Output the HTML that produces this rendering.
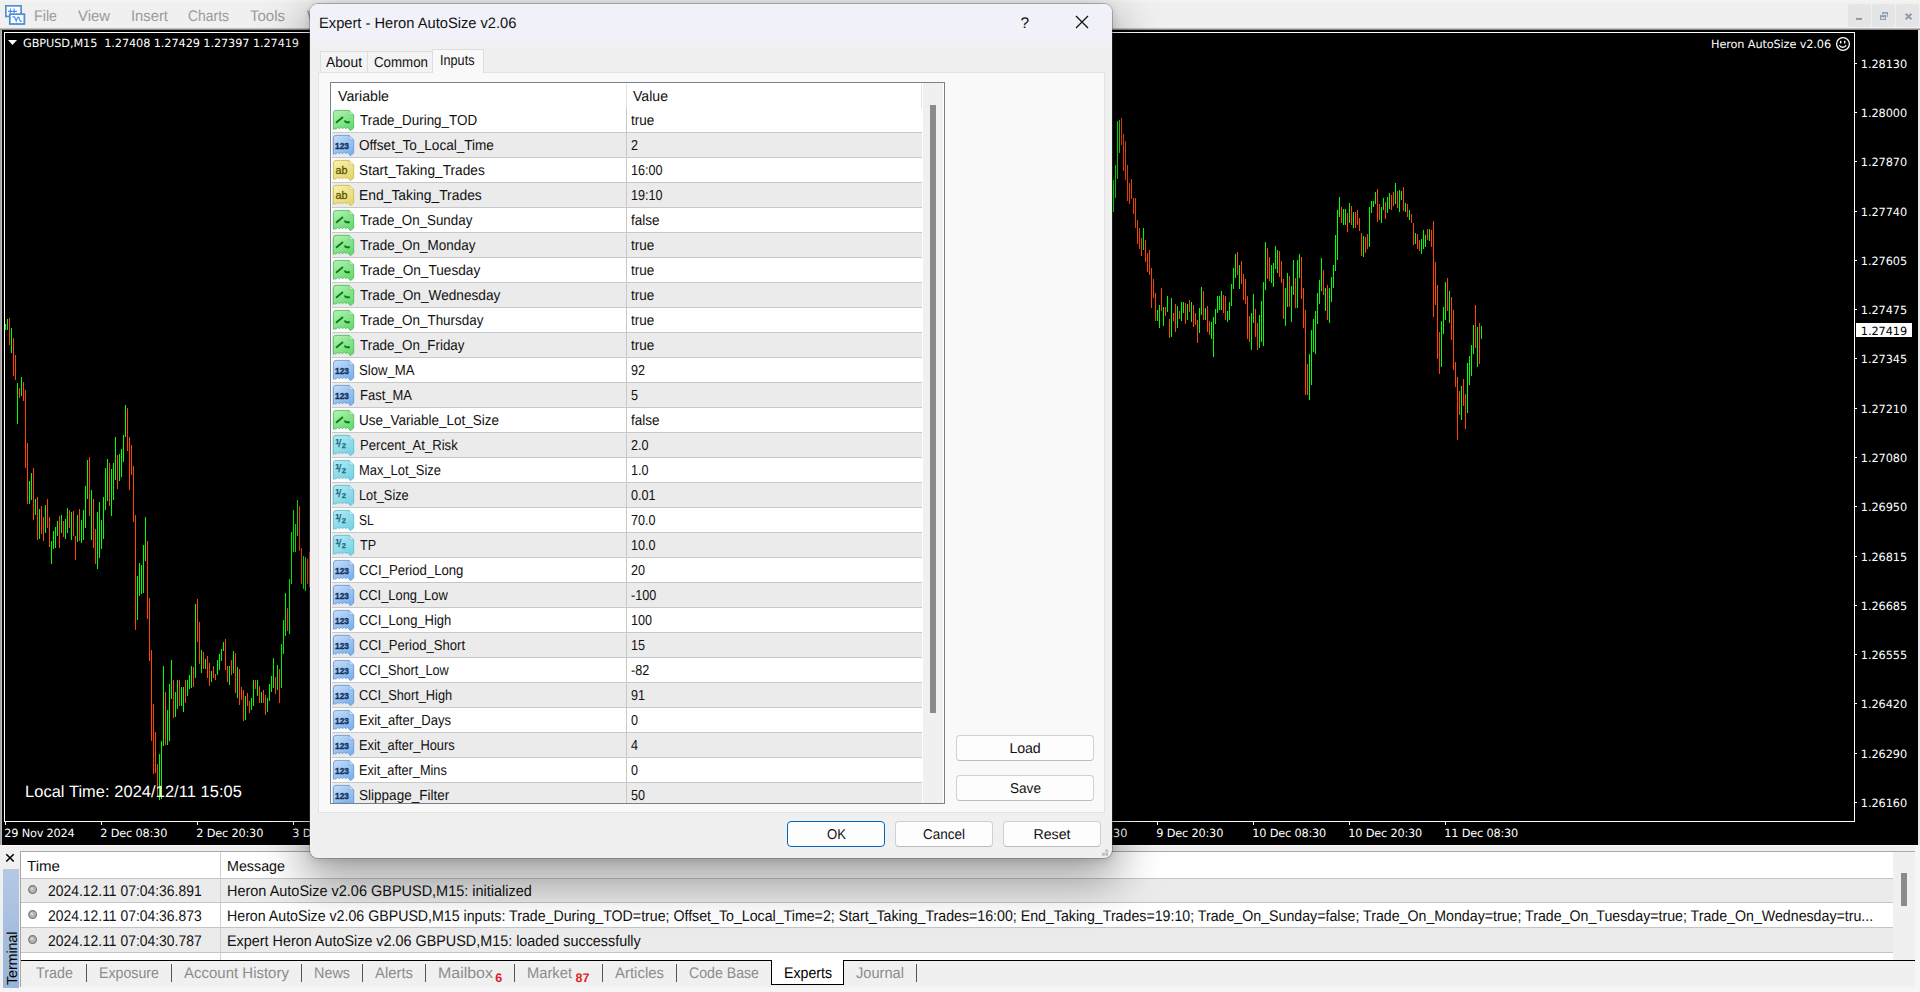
<!DOCTYPE html>
<html><head><meta charset="utf-8"><title>Expert - Heron AutoSize v2.06</title>
<style>
html,body{margin:0;padding:0;}
body{width:1920px;height:992px;overflow:hidden;background:#f0f0f0;position:relative;font-family:"Liberation Sans",sans-serif;}
.t{position:absolute;white-space:pre;text-rendering:geometricPrecision;}
.r{position:absolute;}
svg{position:absolute;overflow:visible;}
</style></head><body>
<div class="r" style="left:0px;top:0px;width:1920px;height:29px;background:linear-gradient(#f4f4f4,#f0f0f0 3px);"></div>
<svg style="left:5px;top:4px" width="22" height="22" viewBox="0 0 22 22">
<rect x="0.8" y="1.8" width="15.4" height="10.6" fill="#fdfdff" stroke="#4a8cf5" stroke-width="1.6"/>
<path d="M0.8 1.8h15.4M0.8 12.4h15.4M0.8 1.8v10.6M16.2 1.8v10.6" stroke="#5a9a7a" stroke-width="1.6" stroke-dasharray="1 2.2" fill="none"/>
<path d="M3 7.4h9M5.4 4.6v4.4M9.2 4.6v4.4" stroke="#4a8cf5" stroke-width="1.1" fill="none"/>
<rect x="4.8" y="10.2" width="14.6" height="9.8" fill="#ffffff" stroke="#4a8cf5" stroke-width="1.7"/>
<path d="M4.8 10.2h14.6M4.8 20h14.6M4.8 10.2v9.8M19.4 10.2v9.8" stroke="#5a9a7a" stroke-width="1.7" stroke-dasharray="1 2.2" fill="none"/>
<path d="M7.4 12.8h2.2l1.6 4.2 1.4-3.6 1.2 0 1.4 3.8 1.6 0" stroke="#4a8cf5" fill="none" stroke-width="1.2"/>
</svg>
<span class="t" style="left:34.00px;top:7.16px;font-size:15.4px;line-height:20px;color:#9b9b9b;transform-origin:0 50%;transform:scale(0.9269,1);">File</span>
<span class="t" style="left:78.00px;top:7.16px;font-size:15.4px;line-height:20px;color:#9b9b9b;transform-origin:0 50%;transform:scale(0.9668,1);">View</span>
<span class="t" style="left:131.00px;top:7.16px;font-size:15.4px;line-height:20px;color:#9b9b9b;transform-origin:0 50%;transform:scale(0.9607,1);">Insert</span>
<span class="t" style="left:188.00px;top:7.16px;font-size:15.4px;line-height:20px;color:#9b9b9b;transform-origin:0 50%;transform:scale(0.9040,1);">Charts</span>
<span class="t" style="left:250.00px;top:7.16px;font-size:15.4px;line-height:20px;color:#9b9b9b;transform-origin:0 50%;transform:scale(0.9736,1);">Tools</span>
<span class="t" style="left:307.00px;top:7.16px;font-size:15.4px;line-height:20px;color:#9b9b9b;transform-origin:0 50%;transform:scale(0.9494,1);">Window</span>
<div class="r" style="left:1848.3px;top:4.2px;width:22.3px;height:22.5px;background:#e5e5e5;border-radius:2.5px;"></div>
<div class="r" style="left:1872.3px;top:4.2px;width:22.3px;height:22.5px;background:#e5e5e5;border-radius:2.5px;"></div>
<div class="r" style="left:1896.3px;top:4.2px;width:22.3px;height:22.5px;background:#e5e5e5;border-radius:2.5px;"></div>
<svg style="left:1848px;top:4px" width="72" height="23" viewBox="0 0 72 23">
<g fill="#8a9bb0">
<rect x="8" y="13.9" width="6" height="2"/>
<rect x="34.3" y="8.1" width="5.6" height="1.5"/><rect x="38.9" y="8.1" width="1" height="4.8"/><rect x="34.3" y="8.1" width="1" height="2.6"/>
<rect x="32" y="11.2" width="6" height="2.1"/><rect x="32" y="11.2" width="1" height="4.7"/><rect x="37" y="11.2" width="1" height="4.7"/><rect x="32" y="14.9" width="6" height="1"/>
</g>
<path d="M57.6 9.8l5.9 5.5M63.5 9.8l-5.9 5.5" stroke="#8a9bb0" stroke-width="1.9" fill="none"/>
</svg>
<div class="r" style="left:0px;top:28px;width:1920px;height:2px;background:linear-gradient(#d8d8d8,#707070);"></div>
<div class="r" style="left:0px;top:30px;width:1920px;height:815px;background:#000;"></div>
<div class="r" style="left:0px;top:30px;width:2px;height:815px;background:linear-gradient(90deg,#9a9a9a,#c4c4c4);"></div>
<div class="r" style="left:1918px;top:30px;width:2px;height:815px;background:#e8e8e8;"></div>
<div class="r" style="left:4px;top:32px;width:1851px;height:1px;background:#fff;"></div>
<div class="r" style="left:4px;top:32px;width:1px;height:790px;background:#fff;"></div>
<div class="r" style="left:4px;top:821px;width:1851px;height:1px;background:#fff;"></div>
<div class="r" style="left:1854px;top:32px;width:1px;height:790px;background:#fff;"></div>
<svg style="left:8px;top:40px" width="10" height="6"><path d="M0 0h9l-4.5 5z" fill="#fff"/></svg>
<span class="t" style="left:23.00px;top:33.59px;font-size:11.3px;line-height:20px;color:#fff;font-family:'DejaVu Sans',sans-serif;letter-spacing:-0.094px;">GBPUSD,M15  1.27408 1.27429 1.27397 1.27419</span>
<span class="t" style="left:1711.00px;top:34.69px;font-size:11.3px;line-height:20px;color:#fff;font-family:'DejaVu Sans',sans-serif;letter-spacing:-0.119px;">Heron AutoSize v2.06</span>
<svg style="left:1835px;top:36px" width="16" height="16" viewBox="0 0 16 16"><g stroke="#fff" fill="none" stroke-width="1.3">
<circle cx="8" cy="8" r="6.4"/><path d="M4.3 9.3c1.2 2.6 5.6 2.6 6.8 0"/></g>
<rect x="5" y="4.8" width="1.4" height="2.6" fill="#fff"/><rect x="9" y="4.8" width="1.4" height="2.6" fill="#fff"/></svg>
<div class="r" style="left:1855px;top:63px;width:2px;height:1px;background:#fff;"></div>
<span class="t" style="left:1860.80px;top:54.69px;font-size:11.3px;line-height:20px;color:#fff;font-family:'DejaVu Sans',sans-serif;letter-spacing:-0.061px;">1.28130</span>
<div class="r" style="left:1855px;top:112px;width:2px;height:1px;background:#fff;"></div>
<span class="t" style="left:1860.80px;top:103.69px;font-size:11.3px;line-height:20px;color:#fff;font-family:'DejaVu Sans',sans-serif;letter-spacing:-0.061px;">1.28000</span>
<div class="r" style="left:1855px;top:161px;width:2px;height:1px;background:#fff;"></div>
<span class="t" style="left:1860.80px;top:152.69px;font-size:11.3px;line-height:20px;color:#fff;font-family:'DejaVu Sans',sans-serif;letter-spacing:-0.061px;">1.27870</span>
<div class="r" style="left:1855px;top:211px;width:2px;height:1px;background:#fff;"></div>
<span class="t" style="left:1860.80px;top:202.69px;font-size:11.3px;line-height:20px;color:#fff;font-family:'DejaVu Sans',sans-serif;letter-spacing:-0.061px;">1.27740</span>
<div class="r" style="left:1855px;top:260px;width:2px;height:1px;background:#fff;"></div>
<span class="t" style="left:1860.80px;top:251.69px;font-size:11.3px;line-height:20px;color:#fff;font-family:'DejaVu Sans',sans-serif;letter-spacing:-0.061px;">1.27605</span>
<div class="r" style="left:1855px;top:309px;width:2px;height:1px;background:#fff;"></div>
<span class="t" style="left:1860.80px;top:300.69px;font-size:11.3px;line-height:20px;color:#fff;font-family:'DejaVu Sans',sans-serif;letter-spacing:-0.061px;">1.27475</span>
<div class="r" style="left:1855px;top:358px;width:2px;height:1px;background:#fff;"></div>
<span class="t" style="left:1860.80px;top:349.69px;font-size:11.3px;line-height:20px;color:#fff;font-family:'DejaVu Sans',sans-serif;letter-spacing:-0.061px;">1.27345</span>
<div class="r" style="left:1855px;top:408px;width:2px;height:1px;background:#fff;"></div>
<span class="t" style="left:1860.80px;top:399.69px;font-size:11.3px;line-height:20px;color:#fff;font-family:'DejaVu Sans',sans-serif;letter-spacing:-0.061px;">1.27210</span>
<div class="r" style="left:1855px;top:457px;width:2px;height:1px;background:#fff;"></div>
<span class="t" style="left:1860.80px;top:448.69px;font-size:11.3px;line-height:20px;color:#fff;font-family:'DejaVu Sans',sans-serif;letter-spacing:-0.061px;">1.27080</span>
<div class="r" style="left:1855px;top:506px;width:2px;height:1px;background:#fff;"></div>
<span class="t" style="left:1860.80px;top:497.69px;font-size:11.3px;line-height:20px;color:#fff;font-family:'DejaVu Sans',sans-serif;letter-spacing:-0.061px;">1.26950</span>
<div class="r" style="left:1855px;top:556px;width:2px;height:1px;background:#fff;"></div>
<span class="t" style="left:1860.80px;top:547.69px;font-size:11.3px;line-height:20px;color:#fff;font-family:'DejaVu Sans',sans-serif;letter-spacing:-0.061px;">1.26815</span>
<div class="r" style="left:1855px;top:605px;width:2px;height:1px;background:#fff;"></div>
<span class="t" style="left:1860.80px;top:596.69px;font-size:11.3px;line-height:20px;color:#fff;font-family:'DejaVu Sans',sans-serif;letter-spacing:-0.061px;">1.26685</span>
<div class="r" style="left:1855px;top:654px;width:2px;height:1px;background:#fff;"></div>
<span class="t" style="left:1860.80px;top:645.69px;font-size:11.3px;line-height:20px;color:#fff;font-family:'DejaVu Sans',sans-serif;letter-spacing:-0.061px;">1.26555</span>
<div class="r" style="left:1855px;top:703px;width:2px;height:1px;background:#fff;"></div>
<span class="t" style="left:1860.80px;top:694.69px;font-size:11.3px;line-height:20px;color:#fff;font-family:'DejaVu Sans',sans-serif;letter-spacing:-0.061px;">1.26420</span>
<div class="r" style="left:1855px;top:753px;width:2px;height:1px;background:#fff;"></div>
<span class="t" style="left:1860.80px;top:744.69px;font-size:11.3px;line-height:20px;color:#fff;font-family:'DejaVu Sans',sans-serif;letter-spacing:-0.061px;">1.26290</span>
<div class="r" style="left:1855px;top:802px;width:2px;height:1px;background:#fff;"></div>
<span class="t" style="left:1860.80px;top:793.69px;font-size:11.3px;line-height:20px;color:#fff;font-family:'DejaVu Sans',sans-serif;letter-spacing:-0.061px;">1.26160</span>
<div class="r" style="left:1856px;top:323px;width:56px;height:14px;background:#fff;"></div>
<span class="t" style="left:1860.80px;top:321.79px;font-size:11.3px;line-height:20px;color:#000;font-family:'DejaVu Sans',sans-serif;letter-spacing:-0.061px;">1.27419</span>
<div class="r" style="left:5px;top:822px;width:1px;height:3px;background:#fff;"></div>
<span class="t" style="left:4.20px;top:823.79px;font-size:11.3px;line-height:20px;color:#fff;font-family:'DejaVu Sans',sans-serif;letter-spacing:-0.175px;">29 Nov 2024</span>
<div class="r" style="left:101px;top:822px;width:1px;height:3px;background:#fff;"></div>
<span class="t" style="left:100.20px;top:823.79px;font-size:11.3px;line-height:20px;color:#fff;font-family:'DejaVu Sans',sans-serif;letter-spacing:-0.166px;">2 Dec 08:30</span>
<div class="r" style="left:197px;top:822px;width:1px;height:3px;background:#fff;"></div>
<span class="t" style="left:196.20px;top:823.79px;font-size:11.3px;line-height:20px;color:#fff;font-family:'DejaVu Sans',sans-serif;letter-spacing:-0.166px;">2 Dec 20:30</span>
<div class="r" style="left:293px;top:822px;width:1px;height:3px;background:#fff;"></div>
<span class="t" style="left:292.20px;top:823.79px;font-size:11.3px;line-height:20px;color:#fff;font-family:'DejaVu Sans',sans-serif;letter-spacing:-0.166px;">3 Dec 08:30</span>
<div class="r" style="left:389px;top:822px;width:1px;height:3px;background:#fff;"></div>
<span class="t" style="left:388.20px;top:823.79px;font-size:11.3px;line-height:20px;color:#fff;font-family:'DejaVu Sans',sans-serif;letter-spacing:-0.166px;">3 Dec 20:30</span>
<div class="r" style="left:485px;top:822px;width:1px;height:3px;background:#fff;"></div>
<span class="t" style="left:484.20px;top:823.79px;font-size:11.3px;line-height:20px;color:#fff;font-family:'DejaVu Sans',sans-serif;letter-spacing:-0.166px;">4 Dec 08:30</span>
<div class="r" style="left:581px;top:822px;width:1px;height:3px;background:#fff;"></div>
<span class="t" style="left:580.20px;top:823.79px;font-size:11.3px;line-height:20px;color:#fff;font-family:'DejaVu Sans',sans-serif;letter-spacing:-0.166px;">4 Dec 20:30</span>
<div class="r" style="left:677px;top:822px;width:1px;height:3px;background:#fff;"></div>
<span class="t" style="left:676.20px;top:823.79px;font-size:11.3px;line-height:20px;color:#fff;font-family:'DejaVu Sans',sans-serif;letter-spacing:-0.166px;">5 Dec 08:30</span>
<div class="r" style="left:773px;top:822px;width:1px;height:3px;background:#fff;"></div>
<span class="t" style="left:772.20px;top:823.79px;font-size:11.3px;line-height:20px;color:#fff;font-family:'DejaVu Sans',sans-serif;letter-spacing:-0.166px;">5 Dec 20:30</span>
<div class="r" style="left:869px;top:822px;width:1px;height:3px;background:#fff;"></div>
<span class="t" style="left:868.20px;top:823.79px;font-size:11.3px;line-height:20px;color:#fff;font-family:'DejaVu Sans',sans-serif;letter-spacing:-0.166px;">6 Dec 08:30</span>
<div class="r" style="left:965px;top:822px;width:1px;height:3px;background:#fff;"></div>
<span class="t" style="left:964.20px;top:823.79px;font-size:11.3px;line-height:20px;color:#fff;font-family:'DejaVu Sans',sans-serif;letter-spacing:-0.166px;">6 Dec 20:30</span>
<div class="r" style="left:1061px;top:822px;width:1px;height:3px;background:#fff;"></div>
<span class="t" style="left:1060.20px;top:823.79px;font-size:11.3px;line-height:20px;color:#fff;font-family:'DejaVu Sans',sans-serif;letter-spacing:-0.166px;">9 Dec 08:30</span>
<div class="r" style="left:1157px;top:822px;width:1px;height:3px;background:#fff;"></div>
<span class="t" style="left:1156.20px;top:823.79px;font-size:11.3px;line-height:20px;color:#fff;font-family:'DejaVu Sans',sans-serif;letter-spacing:-0.166px;">9 Dec 20:30</span>
<div class="r" style="left:1253px;top:822px;width:1px;height:3px;background:#fff;"></div>
<span class="t" style="left:1252.20px;top:823.79px;font-size:11.3px;line-height:20px;color:#fff;font-family:'DejaVu Sans',sans-serif;letter-spacing:-0.168px;">10 Dec 08:30</span>
<div class="r" style="left:1349px;top:822px;width:1px;height:3px;background:#fff;"></div>
<span class="t" style="left:1348.20px;top:823.79px;font-size:11.3px;line-height:20px;color:#fff;font-family:'DejaVu Sans',sans-serif;letter-spacing:-0.168px;">10 Dec 20:30</span>
<div class="r" style="left:1445px;top:822px;width:1px;height:3px;background:#fff;"></div>
<span class="t" style="left:1444.20px;top:823.79px;font-size:11.3px;line-height:20px;color:#fff;font-family:'DejaVu Sans',sans-serif;letter-spacing:-0.168px;">11 Dec 08:30</span>
<svg style="left:0;top:0" width="1920" height="845" shape-rendering="crispEdges"><path fill="#00ff00" d="M5 324v6h1v-6zM7 319v11h1v-11zM11 328v25h1v-25zM17 383v41h1v-41zM21 377v19h1v-19zM29 481v23h1v-23zM31 473v27h1v-27zM35 499v16h1v-16zM39 509v30h1v-30zM45 505v28h1v-28zM51 541v23h1v-23zM53 531v18h1v-18zM55 527v21h1v-21zM57 521v15h1v-15zM61 515v18h1v-18zM65 519v20h1v-20zM67 508v25h1v-25zM71 512v28h1v-28zM77 515v27h1v-27zM81 520v23h1v-23zM83 510v30h1v-30zM85 486v42h1v-42zM87 460v39h1v-39zM91 490v50h1v-50zM97 512v57h1v-57zM99 502v56h1v-56zM101 520v29h1v-29zM103 497v42h1v-42zM105 468v42h1v-42zM107 459v42h1v-42zM111 469v47h1v-47zM113 463v37h1v-37zM115 437v43h1v-43zM119 454v27h1v-27zM121 449v28h1v-28zM123 435v27h1v-27zM125 405v32h1v-32zM137 576v44h1v-44zM139 563v33h1v-33zM141 565v29h1v-29zM143 545v48h1v-48zM145 517v44h1v-44zM159 754v46h1v-46zM161 741v58h1v-58zM163 666v80h1v-80zM167 710v35h1v-35zM169 684v57h1v-57zM171 660v39h1v-39zM175 692v25h1v-25zM177 680v29h1v-29zM181 687v19h1v-19zM183 687v25h1v-25zM187 680v16h1v-16zM189 675v14h1v-14zM191 666v22h1v-22zM195 604v74h1v-74zM201 650v23h1v-23zM205 659v10h1v-10zM211 671v11h1v-11zM217 660v15h1v-15zM219 654v16h1v-16zM221 649v12h1v-12zM223 642v9h1v-9zM229 666v19h1v-19zM233 651v22h1v-22zM237 667v31h1v-31zM245 696v24h1v-24zM251 698v12h1v-12zM253 680v26h1v-26zM257 680v16h1v-16zM261 692v11h1v-11zM267 698v14h1v-14zM269 684v17h1v-17zM271 676v16h1v-16zM273 658v30h1v-30zM277 665v25h1v-25zM281 644v44h1v-44zM283 620v34h1v-34zM285 593v43h1v-43zM289 579v55h1v-55zM291 532v52h1v-52zM293 510v42h1v-42zM295 524v28h1v-28zM297 500v36h1v-36zM303 556v33h1v-33zM305 557v34h1v-34zM1113 180v32h1v-32zM1115 165v33h1v-33zM1117 121v58h1v-58zM1119 120v33h1v-33zM1143 228v22h1v-22zM1157 310v11h1v-11zM1159 305v23h1v-23zM1163 307v19h1v-19zM1167 296v16h1v-16zM1171 298v39h1v-39zM1177 306v22h1v-22zM1181 302v19h1v-19zM1183 302v11h1v-11zM1187 304v16h1v-16zM1191 302v20h1v-20zM1199 308v25h1v-25zM1201 287v28h1v-28zM1205 308v12h1v-12zM1211 322v17h1v-17zM1213 317v40h1v-40zM1215 309v15h1v-15zM1217 296v17h1v-17zM1219 296v14h1v-14zM1221 291v19h1v-19zM1227 311v11h1v-11zM1229 302v18h1v-18zM1231 284v22h1v-22zM1233 268v21h1v-21zM1235 254v24h1v-24zM1239 265v24h1v-24zM1251 313v37h1v-37zM1253 294v29h1v-29zM1259 315v33h1v-33zM1261 301v41h1v-41zM1263 282v64h1v-64zM1265 242v48h1v-48zM1271 265v18h1v-18zM1273 263v24h1v-24zM1275 246v23h1v-23zM1277 250v23h1v-23zM1285 288v38h1v-38zM1287 273v34h1v-34zM1291 286v36h1v-36zM1293 260v35h1v-35zM1297 260v48h1v-48zM1299 254v24h1v-24zM1309 354v46h1v-46zM1311 330v55h1v-55zM1313 319v33h1v-33zM1315 311v43h1v-43zM1317 293v31h1v-31zM1319 280v24h1v-24zM1321 258v33h1v-33zM1325 288v23h1v-23zM1329 288v35h1v-35zM1331 277v25h1v-25zM1333 265v23h1v-23zM1335 235v36h1v-36zM1337 210v50h1v-50zM1339 197v20h1v-20zM1343 209v16h1v-16zM1345 209v16h1v-16zM1349 203v20h1v-20zM1353 212v16h1v-16zM1363 236v21h1v-21zM1369 207v40h1v-40zM1371 201v12h1v-12zM1373 201v6h1v-6zM1375 192v12h1v-12zM1381 207v16h1v-16zM1383 198v12h1v-12zM1387 197v16h1v-16zM1389 193v16h1v-16zM1395 183v21h1v-21zM1399 190v22h1v-22zM1401 191v9h1v-9zM1405 203v9h1v-9zM1409 210v10h1v-10zM1415 233v11h1v-11zM1421 239v15h1v-15zM1423 230v19h1v-19zM1425 235v12h1v-12zM1429 229v12h1v-12zM1441 321v46h1v-46zM1443 307v27h1v-27zM1445 282v38h1v-38zM1449 291v32h1v-32zM1461 386v34h1v-34zM1467 363v50h1v-50zM1469 356v29h1v-29zM1471 345v31h1v-31zM1473 325v29h1v-29zM1477 327v40h1v-40zM1481 326v13h1v-13z"/><path fill="#ff4500" d="M9 318v27h1v-27zM13 338v38h1v-38zM15 355v25h1v-25zM19 388v10h1v-10zM23 382v19h1v-19zM25 390v78h1v-78zM27 443v61h1v-61zM33 468v52h1v-52zM37 497v43h1v-43zM41 506v28h1v-28zM43 517v24h1v-24zM47 499v29h1v-29zM49 517v30h1v-30zM59 516v32h1v-32zM63 521v16h1v-16zM69 510v18h1v-18zM73 511v25h1v-25zM75 536v24h1v-24zM79 509v32h1v-32zM89 457v59h1v-59zM93 499v49h1v-49zM95 529v35h1v-35zM109 463v43h1v-43zM117 455v34h1v-34zM127 408v43h1v-43zM129 437v53h1v-53zM131 445v30h1v-30zM133 466v56h1v-56zM135 515v115h1v-115zM147 541v78h1v-78zM149 598v63h1v-63zM151 650v91h1v-91zM153 704v70h1v-70zM155 732v41h1v-41zM157 764v32h1v-32zM165 692v53h1v-53zM173 680v38h1v-38zM179 680v26h1v-26zM185 680v23h1v-23zM193 667v20h1v-20zM197 599v43h1v-43zM199 622v42h1v-42zM203 652v17h1v-17zM207 656v22h1v-22zM209 663v23h1v-23zM213 666v12h1v-12zM215 674v6h1v-6zM225 639v31h1v-31zM227 666v16h1v-16zM231 660v15h1v-15zM235 653v40h1v-40zM239 669v36h1v-36zM241 687v13h1v-13zM243 690v31h1v-31zM247 693v13h1v-13zM249 701v12h1v-12zM255 680v9h1v-9zM259 686v17h1v-17zM263 690v13h1v-13zM265 695v20h1v-20zM275 677v17h1v-17zM279 669v34h1v-34zM287 608v23h1v-23zM299 506v45h1v-45zM301 548v36h1v-36zM307 559v25h1v-25zM309 552v35h1v-35zM1121 118v27h1v-27zM1123 134v37h1v-37zM1125 141v39h1v-39zM1127 165v36h1v-36zM1129 183v21h1v-21zM1131 179v20h1v-20zM1133 198v16h1v-16zM1135 198v30h1v-30zM1137 220v24h1v-24zM1139 228v21h1v-21zM1141 238v18h1v-18zM1145 240v22h1v-22zM1147 253v19h1v-19zM1149 250v25h1v-25zM1151 268v40h1v-40zM1153 279v19h1v-19zM1155 293v28h1v-28zM1161 288v23h1v-23zM1165 307v9h1v-9zM1169 319v19h1v-19zM1173 313v8h1v-8zM1175 304v28h1v-28zM1179 311v8h1v-8zM1185 303v21h1v-21zM1189 300v12h1v-12zM1193 305v22h1v-22zM1195 313v12h1v-12zM1197 320v23h1v-23zM1203 291v29h1v-29zM1207 306v26h1v-26zM1209 321v14h1v-14zM1223 295v18h1v-18zM1225 296v24h1v-24zM1237 252v23h1v-23zM1241 261v23h1v-23zM1243 274v26h1v-26zM1245 279v25h1v-25zM1247 296v43h1v-43zM1249 316v26h1v-26zM1255 309v28h1v-28zM1257 323v27h1v-27zM1267 248v31h1v-31zM1269 257v24h1v-24zM1279 251v26h1v-26zM1281 261v22h1v-22zM1283 279v40h1v-40zM1289 276v31h1v-31zM1295 278v30h1v-30zM1301 257v42h1v-42zM1303 288v40h1v-40zM1305 310v85h1v-85zM1307 364v31h1v-31zM1323 270v25h1v-25zM1327 285v35h1v-35zM1341 207v16h1v-16zM1347 213v19h1v-19zM1351 206v19h1v-19zM1355 212v16h1v-16zM1357 210v15h1v-15zM1359 218v13h1v-13zM1361 233v23h1v-23zM1365 237v16h1v-16zM1367 234v15h1v-15zM1377 189v33h1v-33zM1379 204v16h1v-16zM1385 202v17h1v-17zM1391 195v15h1v-15zM1393 192v14h1v-14zM1397 191v17h1v-17zM1403 187v24h1v-24zM1407 204v13h1v-13zM1411 214v9h1v-9zM1413 223v22h1v-22zM1417 234v15h1v-15zM1419 240v11h1v-11zM1427 229v11h1v-11zM1431 230v17h1v-17zM1433 221v96h1v-96zM1435 262v43h1v-43zM1437 285v74h1v-74zM1439 332v42h1v-42zM1447 278v33h1v-33zM1451 297v43h1v-43zM1453 310v60h1v-60zM1455 362v25h1v-25zM1457 377v63h1v-63zM1459 391v24h1v-24zM1463 379v27h1v-27zM1465 394v35h1v-35zM1475 305v43h1v-43zM1479 323v41h1v-41z"/></svg>
<span class="t" style="left:25.00px;top:782.32px;font-size:16.4px;line-height:20px;color:#fff;letter-spacing:0.077px;">Local Time: 2024/12/11 15:05</span>
<div class="r" style="left:0px;top:845px;width:1920px;height:147px;background:#f0f0f0;"></div>
<div class="r" style="left:0px;top:845px;width:1920px;height:1px;background:#fafafa;"></div>
<div class="r" style="left:0px;top:987px;width:1920px;height:5px;background:#f5f5f5;"></div>
<div class="r" style="left:1915px;top:846px;width:5px;height:146px;background:#f6f6f6;"></div>
<svg style="left:5px;top:852px" width="12" height="12"><path d="M1.3 2.3l7.4 7.2M8.7 2.3l-7.4 7.2" stroke="#000" stroke-width="1.6" fill="none"/></svg>
<div class="r" style="left:3px;top:869px;width:16px;height:119px;background:linear-gradient(#b5c9e4,#98b4d9);"></div>
<span class="t" style="left:4.6px;top:988px;width:118px;height:16px;line-height:16px;font-size:14.5px;letter-spacing:-0.2px;transform-origin:0 0;transform:rotate(-90deg);color:#000;padding-left:3px;box-sizing:border-box;">Terminal</span>
<div class="r" style="left:20px;top:851px;width:1895px;height:1px;background:#a8a8a8;"></div>
<div class="r" style="left:20px;top:851px;width:1px;height:136px;background:#a6a6a6;"></div>
<div class="r" style="left:21px;top:852px;width:1872px;height:108px;background:#fff;"></div>
<div class="r" style="left:21px;top:879px;width:1872px;height:23px;background:#ebebeb;"></div>
<div class="r" style="left:21px;top:928px;width:1872px;height:24px;background:#ebebeb;"></div>
<div class="r" style="left:21px;top:878px;width:1872px;height:1px;background:#c4c4c4;"></div>
<div class="r" style="left:21px;top:902px;width:1872px;height:1px;background:#c4c4c4;"></div>
<div class="r" style="left:21px;top:927px;width:1872px;height:1px;background:#c4c4c4;"></div>
<div class="r" style="left:21px;top:952px;width:1872px;height:1px;background:#c4c4c4;"></div>
<div class="r" style="left:220px;top:852px;width:1px;height:108px;background:#d0d0d0;"></div>
<div class="r" style="left:21px;top:960px;width:1894px;height:1.3px;background:#000;"></div>
<div class="r" style="left:1901px;top:873px;width:6px;height:33px;background:#8b8b8b;"></div>
<span class="t" style="left:27.00px;top:857.24px;font-size:14.6px;line-height:20px;color:#111;transform-origin:0 50%;transform:scale(1.0345,1);">Time</span>
<span class="t" style="left:227.00px;top:857.24px;font-size:14.6px;line-height:20px;color:#111;transform-origin:0 50%;transform:scale(0.9791,1);">Message</span>
<svg style="left:28px;top:885px" width="10" height="10"><circle cx="4.6" cy="4.6" r="3.9" fill="#b2b2b2" stroke="#787878" stroke-width="1.2"/><circle cx="3.9" cy="3.8" r="1.5" fill="#d6d6d6"/></svg>
<span class="t" style="left:48.30px;top:881.66px;font-size:15.4px;line-height:20px;color:#111;transform-origin:0 50%;transform:scale(0.9035,1);">2024.12.11 07:04:36.891</span>
<span class="t" style="left:226.50px;top:881.66px;font-size:15.4px;line-height:20px;color:#111;transform-origin:0 50%;transform:scale(0.9402,1);">Heron AutoSize v2.06 GBPUSD,M15: initialized</span>
<svg style="left:28px;top:910px" width="10" height="10"><circle cx="4.6" cy="4.6" r="3.9" fill="#b2b2b2" stroke="#787878" stroke-width="1.2"/><circle cx="3.9" cy="3.8" r="1.5" fill="#d6d6d6"/></svg>
<span class="t" style="left:48.30px;top:906.66px;font-size:15.4px;line-height:20px;color:#111;transform-origin:0 50%;transform:scale(0.9035,1);">2024.12.11 07:04:36.873</span>
<span class="t" style="left:226.50px;top:906.66px;font-size:15.4px;line-height:20px;color:#111;transform-origin:0 50%;transform:scale(0.9218,1);">Heron AutoSize v2.06 GBPUSD,M15 inputs: Trade_During_TOD=true; Offset_To_Local_Time=2; Start_Taking_Trades=16:00; End_Taking_Trades=19:10; Trade_On_Sunday=false; Trade_On_Monday=true; Trade_On_Tuesday=true; Trade_On_Wednesday=tru...</span>
<svg style="left:28px;top:935px" width="10" height="10"><circle cx="4.6" cy="4.6" r="3.9" fill="#b2b2b2" stroke="#787878" stroke-width="1.2"/><circle cx="3.9" cy="3.8" r="1.5" fill="#d6d6d6"/></svg>
<span class="t" style="left:48.30px;top:931.66px;font-size:15.4px;line-height:20px;color:#111;transform-origin:0 50%;transform:scale(0.9035,1);">2024.12.11 07:04:30.787</span>
<span class="t" style="left:226.50px;top:931.66px;font-size:15.4px;line-height:20px;color:#111;transform-origin:0 50%;transform:scale(0.9337,1);">Expert Heron AutoSize v2.06 GBPUSD,M15: loaded successfully</span>
<span class="t" style="left:36.00px;top:963.86px;font-size:15.4px;line-height:20px;color:#8c8c8c;transform-origin:0 50%;transform:scale(0.9330,1);">Trade</span>
<span class="t" style="left:99.00px;top:963.86px;font-size:15.4px;line-height:20px;color:#8c8c8c;transform-origin:0 50%;transform:scale(0.9223,1);">Exposure</span>
<span class="t" style="left:184.00px;top:963.86px;font-size:15.4px;line-height:20px;color:#8c8c8c;transform-origin:0 50%;transform:scale(0.9737,1);">Account History</span>
<span class="t" style="left:314.00px;top:963.86px;font-size:15.4px;line-height:20px;color:#8c8c8c;transform-origin:0 50%;transform:scale(0.9349,1);">News</span>
<span class="t" style="left:375.00px;top:963.86px;font-size:15.4px;line-height:20px;color:#8c8c8c;transform-origin:0 50%;transform:scale(0.9654,1);">Alerts</span>
<span class="t" style="left:438.00px;top:963.86px;font-size:15.4px;line-height:20px;color:#8c8c8c;transform-origin:0 50%;transform:scale(1.0365,1);">Mailbox</span>
<span class="t" style="left:527.00px;top:963.86px;font-size:15.4px;line-height:20px;color:#8c8c8c;transform-origin:0 50%;transform:scale(0.9562,1);">Market</span>
<span class="t" style="left:615.00px;top:963.86px;font-size:15.4px;line-height:20px;color:#8c8c8c;transform-origin:0 50%;transform:scale(0.9706,1);">Articles</span>
<span class="t" style="left:689.00px;top:963.86px;font-size:15.4px;line-height:20px;color:#8c8c8c;transform-origin:0 50%;transform:scale(0.9187,1);">Code Base</span>
<div class="r" style="left:771px;top:960px;width:73px;height:25.3px;background:#fff;border:1.5px solid #000;border-top:none;box-sizing:border-box;"></div>
<span class="t" style="left:784.00px;top:963.86px;font-size:15.4px;line-height:20px;color:#000;transform-origin:0 50%;transform:scale(0.9194,1);">Experts</span>
<span class="t" style="left:856.00px;top:963.86px;font-size:15.4px;line-height:20px;color:#8c8c8c;transform-origin:0 50%;transform:scale(0.9504,1);">Journal</span>
<div class="r" style="left:86px;top:964px;width:1px;height:18px;background:#555;"></div>
<div class="r" style="left:171px;top:964px;width:1px;height:18px;background:#555;"></div>
<div class="r" style="left:301px;top:964px;width:1px;height:18px;background:#555;"></div>
<div class="r" style="left:362px;top:964px;width:1px;height:18px;background:#555;"></div>
<div class="r" style="left:425px;top:964px;width:1px;height:18px;background:#555;"></div>
<div class="r" style="left:514px;top:964px;width:1px;height:18px;background:#555;"></div>
<div class="r" style="left:602px;top:964px;width:1px;height:18px;background:#555;"></div>
<div class="r" style="left:676px;top:964px;width:1px;height:18px;background:#555;"></div>
<div class="r" style="left:916px;top:964px;width:1px;height:18px;background:#555;"></div>
<span class="t" style="left:495.20px;top:967.67px;font-size:12.5px;line-height:20px;color:#e0202a;font-weight:bold;">6</span>
<span class="t" style="left:575.60px;top:967.67px;font-size:12.5px;line-height:20px;color:#e0202a;font-weight:bold;">87</span>
<div class="r" style="left:310px;top:3.5px;width:802px;height:854.3px;background:#f0f0f0;border-radius:8px;box-shadow:0 0 0 1px rgba(80,80,80,0.35),0 18px 46px 6px rgba(0,0,0,0.36),0 2px 10px rgba(0,0,0,0.14);overflow:hidden;"><div style="height:37.5px;background:#f1f2f9"></div></div>
<span class="t" style="left:319.00px;top:13.80px;font-size:15px;line-height:20px;color:#111;transform-origin:0 50%;transform:scale(0.9784,1);">Expert - Heron AutoSize v2.06</span>
<span class="t" style="left:1020.50px;top:14.13px;font-size:15.5px;line-height:20px;color:#111;">?</span>
<svg style="left:1075px;top:15px" width="14" height="14"><path d="M1 1l12 12M13 1l-12 12" stroke="#111" stroke-width="1.3" fill="none"/></svg>
<div class="r" style="left:318px;top:72px;width:786.5px;height:741px;background:#f9f9f9;border:1px solid #e3e3e3;box-sizing:border-box;"></div>
<div class="r" style="left:320px;top:51px;width:113px;height:21px;background:#f3f3f3;border:1px solid #dedede;border-bottom:none;box-sizing:border-box;"></div>
<div class="r" style="left:367px;top:52px;width:1px;height:20px;background:#dedede;"></div>
<div class="r" style="left:432px;top:49px;width:51.5px;height:24px;background:#f9f9f9;border:1px solid #dedede;border-bottom:none;box-sizing:border-box;"></div>
<span class="t" style="left:326.00px;top:53.38px;font-size:14.5px;line-height:20px;color:#111;transform-origin:0 50%;transform:scale(0.9501,1);">About</span>
<span class="t" style="left:374.00px;top:53.38px;font-size:14.5px;line-height:20px;color:#111;transform-origin:0 50%;transform:scale(0.9181,1);">Common</span>
<span class="t" style="left:440.00px;top:51.38px;font-size:14.5px;line-height:20px;color:#111;transform-origin:0 50%;transform:scale(0.8735,1);">Inputs</span>
<div class="r" style="left:330px;top:82px;width:615px;height:721.5px;background:#fff;border:1px solid #7a808e;box-sizing:border-box;"></div>
<svg width="0" height="0" style="left:0;top:0">
<linearGradient id="gb" x1="0" y1="0" x2="0.6" y2="1"><stop offset="0" stop-color="#b2f3b2"/><stop offset="1" stop-color="#6adb74"/></linearGradient>
<linearGradient id="gi" x1="0" y1="0" x2="0.6" y2="1"><stop offset="0" stop-color="#c6def8"/><stop offset="1" stop-color="#7fb3ec"/></linearGradient>
<linearGradient id="gs" x1="0" y1="0" x2="0.6" y2="1"><stop offset="0" stop-color="#f8f2b0"/><stop offset="1" stop-color="#e6d870"/></linearGradient>
<linearGradient id="gd" x1="0" y1="0" x2="0.6" y2="1"><stop offset="0" stop-color="#b4ecf5"/><stop offset="1" stop-color="#7ad3e5"/></linearGradient>
</svg>
<span class="t" style="left:338.00px;top:86.88px;font-size:14.5px;line-height:20px;color:#111;transform-origin:0 50%;transform:scale(0.9785,1);">Variable</span>
<span class="t" style="left:633.00px;top:86.88px;font-size:14.5px;line-height:20px;color:#111;transform-origin:0 50%;transform:scale(0.9720,1);">Value</span>
<div class="r" style="left:626px;top:84px;width:1px;height:24px;background:#e2e2e2;"></div>
<div class="r" style="left:921px;top:84px;width:1px;height:24px;background:#e2e2e2;"></div>
<div class="r" style="left:0;top:0;width:1920px;height:802.5px;overflow:hidden">
<div class="r" style="left:331.5px;top:132px;width:590.5px;height:1px;background:#c8c8c8;"></div>
<div class="r" style="left:626px;top:108px;width:1px;height:25px;background:#c8c8c8;"></div>
<div class="r" style="left:331.5px;top:133px;width:590.5px;height:24px;background:#ebebeb;"></div>
<div class="r" style="left:331.5px;top:157px;width:590.5px;height:1px;background:#c8c8c8;"></div>
<div class="r" style="left:626px;top:133px;width:1px;height:25px;background:#c8c8c8;"></div>
<div class="r" style="left:331.5px;top:182px;width:590.5px;height:1px;background:#c8c8c8;"></div>
<div class="r" style="left:626px;top:158px;width:1px;height:25px;background:#c8c8c8;"></div>
<div class="r" style="left:331.5px;top:183px;width:590.5px;height:24px;background:#ebebeb;"></div>
<div class="r" style="left:331.5px;top:207px;width:590.5px;height:1px;background:#c8c8c8;"></div>
<div class="r" style="left:626px;top:183px;width:1px;height:25px;background:#c8c8c8;"></div>
<div class="r" style="left:331.5px;top:232px;width:590.5px;height:1px;background:#c8c8c8;"></div>
<div class="r" style="left:626px;top:208px;width:1px;height:25px;background:#c8c8c8;"></div>
<div class="r" style="left:331.5px;top:233px;width:590.5px;height:24px;background:#ebebeb;"></div>
<div class="r" style="left:331.5px;top:257px;width:590.5px;height:1px;background:#c8c8c8;"></div>
<div class="r" style="left:626px;top:233px;width:1px;height:25px;background:#c8c8c8;"></div>
<div class="r" style="left:331.5px;top:282px;width:590.5px;height:1px;background:#c8c8c8;"></div>
<div class="r" style="left:626px;top:258px;width:1px;height:25px;background:#c8c8c8;"></div>
<div class="r" style="left:331.5px;top:283px;width:590.5px;height:24px;background:#ebebeb;"></div>
<div class="r" style="left:331.5px;top:307px;width:590.5px;height:1px;background:#c8c8c8;"></div>
<div class="r" style="left:626px;top:283px;width:1px;height:25px;background:#c8c8c8;"></div>
<div class="r" style="left:331.5px;top:332px;width:590.5px;height:1px;background:#c8c8c8;"></div>
<div class="r" style="left:626px;top:308px;width:1px;height:25px;background:#c8c8c8;"></div>
<div class="r" style="left:331.5px;top:333px;width:590.5px;height:24px;background:#ebebeb;"></div>
<div class="r" style="left:331.5px;top:357px;width:590.5px;height:1px;background:#c8c8c8;"></div>
<div class="r" style="left:626px;top:333px;width:1px;height:25px;background:#c8c8c8;"></div>
<div class="r" style="left:331.5px;top:382px;width:590.5px;height:1px;background:#c8c8c8;"></div>
<div class="r" style="left:626px;top:358px;width:1px;height:25px;background:#c8c8c8;"></div>
<div class="r" style="left:331.5px;top:383px;width:590.5px;height:24px;background:#ebebeb;"></div>
<div class="r" style="left:331.5px;top:407px;width:590.5px;height:1px;background:#c8c8c8;"></div>
<div class="r" style="left:626px;top:383px;width:1px;height:25px;background:#c8c8c8;"></div>
<div class="r" style="left:331.5px;top:432px;width:590.5px;height:1px;background:#c8c8c8;"></div>
<div class="r" style="left:626px;top:408px;width:1px;height:25px;background:#c8c8c8;"></div>
<div class="r" style="left:331.5px;top:433px;width:590.5px;height:24px;background:#ebebeb;"></div>
<div class="r" style="left:331.5px;top:457px;width:590.5px;height:1px;background:#c8c8c8;"></div>
<div class="r" style="left:626px;top:433px;width:1px;height:25px;background:#c8c8c8;"></div>
<div class="r" style="left:331.5px;top:482px;width:590.5px;height:1px;background:#c8c8c8;"></div>
<div class="r" style="left:626px;top:458px;width:1px;height:25px;background:#c8c8c8;"></div>
<div class="r" style="left:331.5px;top:483px;width:590.5px;height:24px;background:#ebebeb;"></div>
<div class="r" style="left:331.5px;top:507px;width:590.5px;height:1px;background:#c8c8c8;"></div>
<div class="r" style="left:626px;top:483px;width:1px;height:25px;background:#c8c8c8;"></div>
<div class="r" style="left:331.5px;top:532px;width:590.5px;height:1px;background:#c8c8c8;"></div>
<div class="r" style="left:626px;top:508px;width:1px;height:25px;background:#c8c8c8;"></div>
<div class="r" style="left:331.5px;top:533px;width:590.5px;height:24px;background:#ebebeb;"></div>
<div class="r" style="left:331.5px;top:557px;width:590.5px;height:1px;background:#c8c8c8;"></div>
<div class="r" style="left:626px;top:533px;width:1px;height:25px;background:#c8c8c8;"></div>
<div class="r" style="left:331.5px;top:582px;width:590.5px;height:1px;background:#c8c8c8;"></div>
<div class="r" style="left:626px;top:558px;width:1px;height:25px;background:#c8c8c8;"></div>
<div class="r" style="left:331.5px;top:583px;width:590.5px;height:24px;background:#ebebeb;"></div>
<div class="r" style="left:331.5px;top:607px;width:590.5px;height:1px;background:#c8c8c8;"></div>
<div class="r" style="left:626px;top:583px;width:1px;height:25px;background:#c8c8c8;"></div>
<div class="r" style="left:331.5px;top:632px;width:590.5px;height:1px;background:#c8c8c8;"></div>
<div class="r" style="left:626px;top:608px;width:1px;height:25px;background:#c8c8c8;"></div>
<div class="r" style="left:331.5px;top:633px;width:590.5px;height:24px;background:#ebebeb;"></div>
<div class="r" style="left:331.5px;top:657px;width:590.5px;height:1px;background:#c8c8c8;"></div>
<div class="r" style="left:626px;top:633px;width:1px;height:25px;background:#c8c8c8;"></div>
<div class="r" style="left:331.5px;top:682px;width:590.5px;height:1px;background:#c8c8c8;"></div>
<div class="r" style="left:626px;top:658px;width:1px;height:25px;background:#c8c8c8;"></div>
<div class="r" style="left:331.5px;top:683px;width:590.5px;height:24px;background:#ebebeb;"></div>
<div class="r" style="left:331.5px;top:707px;width:590.5px;height:1px;background:#c8c8c8;"></div>
<div class="r" style="left:626px;top:683px;width:1px;height:25px;background:#c8c8c8;"></div>
<div class="r" style="left:331.5px;top:732px;width:590.5px;height:1px;background:#c8c8c8;"></div>
<div class="r" style="left:626px;top:708px;width:1px;height:25px;background:#c8c8c8;"></div>
<div class="r" style="left:331.5px;top:733px;width:590.5px;height:24px;background:#ebebeb;"></div>
<div class="r" style="left:331.5px;top:757px;width:590.5px;height:1px;background:#c8c8c8;"></div>
<div class="r" style="left:626px;top:733px;width:1px;height:25px;background:#c8c8c8;"></div>
<div class="r" style="left:331.5px;top:782px;width:590.5px;height:1px;background:#c8c8c8;"></div>
<div class="r" style="left:626px;top:758px;width:1px;height:25px;background:#c8c8c8;"></div>
<div class="r" style="left:331.5px;top:783px;width:590.5px;height:24px;background:#ebebeb;"></div>
<div class="r" style="left:331.5px;top:807px;width:590.5px;height:1px;background:#c8c8c8;"></div>
<div class="r" style="left:626px;top:783px;width:1px;height:25px;background:#c8c8c8;"></div>
<svg style="left:333px;top:109.8px" width="21" height="21" viewBox="0 0 21 21"><path d="M0.4 3Q0.4 0.4 3 0.4H16.2L20.7 4.8V18L17.4 20.7 14.6 17.4 13 18.6 11.3 17.2 9.6 18.6 8 17.3 6.4 18.8 4.8 17.3 2.8 19.2 1.8 18.4 0.4 19.4z" fill="url(#gb)" stroke="#4fbb5a" stroke-width="0.85"/><path d="M16.2 0.4V4.8H20.7z" fill="#ffffff" fill-opacity="0.45"/><path d="M16.2 0.6V4.8H20.5" fill="none" stroke="#4fbb5a" stroke-opacity="0.7" stroke-width="0.7"/><path d="M3 12.8L10 7.1M11.7 10.6Q12.2 12.3 13.6 12.3H16.8" stroke="#0b7a12" stroke-width="1.9" fill="none"/></svg>
<span class="t" style="left:359.90px;top:111.18px;font-size:14.5px;line-height:20px;color:#111;transform-origin:0 50%;transform:scale(0.9256,1);">Trade_During_TOD</span>
<span class="t" style="left:631.00px;top:111.18px;font-size:14.5px;line-height:20px;color:#111;transform-origin:0 50%;transform:scale(0.9310,1);">true</span>
<svg style="left:333px;top:134.8px" width="21" height="21" viewBox="0 0 21 21"><path d="M0.4 3Q0.4 0.4 3 0.4H16.2L20.7 4.8V18L17.4 20.7 14.6 17.4 13 18.6 11.3 17.2 9.6 18.6 8 17.3 6.4 18.8 4.8 17.3 2.8 19.2 1.8 18.4 0.4 19.4z" fill="url(#gi)" stroke="#6596d6" stroke-width="0.85"/><path d="M16.2 0.4V4.8H20.7z" fill="#ffffff" fill-opacity="0.45"/><path d="M16.2 0.6V4.8H20.5" fill="none" stroke="#6596d6" stroke-opacity="0.7" stroke-width="0.7"/><text x="2.1" y="13.8" font-size="9.2" font-weight="bold" font-family="'Liberation Sans',sans-serif" fill="#15305c" stroke="#15305c" stroke-width="0.35" textLength="13.9" lengthAdjust="spacingAndGlyphs">123</text></svg>
<span class="t" style="left:359.30px;top:136.18px;font-size:14.5px;line-height:20px;color:#111;transform-origin:0 50%;transform:scale(0.9351,1);">Offset_To_Local_Time</span>
<span class="t" style="left:631.00px;top:136.18px;font-size:14.5px;line-height:20px;color:#111;transform-origin:0 50%;transform:scale(0.8705,1);">2</span>
<svg style="left:333px;top:159.8px" width="21" height="21" viewBox="0 0 21 21"><path d="M0.4 3Q0.4 0.4 3 0.4H16.2L20.7 4.8V18L17.4 20.7 14.6 17.4 13 18.6 11.3 17.2 9.6 18.6 8 17.3 6.4 18.8 4.8 17.3 2.8 19.2 1.8 18.4 0.4 19.4z" fill="url(#gs)" stroke="#cdb945" stroke-width="0.85"/><path d="M16.2 0.4V4.8H20.7z" fill="#ffffff" fill-opacity="0.45"/><path d="M16.2 0.6V4.8H20.5" fill="none" stroke="#cdb945" stroke-opacity="0.7" stroke-width="0.7"/><text x="2.5" y="13.6" font-size="10.6" font-family="'Liberation Sans',sans-serif" fill="#5c5200" stroke="#5c5200" stroke-width="0.3" textLength="12" lengthAdjust="spacingAndGlyphs">ab</text></svg>
<span class="t" style="left:359.30px;top:161.18px;font-size:14.5px;line-height:20px;color:#111;transform-origin:0 50%;transform:scale(0.9441,1);">Start_Taking_Trades</span>
<span class="t" style="left:631.00px;top:161.18px;font-size:14.5px;line-height:20px;color:#111;transform-origin:0 50%;transform:scale(0.8705,1);">16:00</span>
<svg style="left:333px;top:184.8px" width="21" height="21" viewBox="0 0 21 21"><path d="M0.4 3Q0.4 0.4 3 0.4H16.2L20.7 4.8V18L17.4 20.7 14.6 17.4 13 18.6 11.3 17.2 9.6 18.6 8 17.3 6.4 18.8 4.8 17.3 2.8 19.2 1.8 18.4 0.4 19.4z" fill="url(#gs)" stroke="#cdb945" stroke-width="0.85"/><path d="M16.2 0.4V4.8H20.7z" fill="#ffffff" fill-opacity="0.45"/><path d="M16.2 0.6V4.8H20.5" fill="none" stroke="#cdb945" stroke-opacity="0.7" stroke-width="0.7"/><text x="2.5" y="13.6" font-size="10.6" font-family="'Liberation Sans',sans-serif" fill="#5c5200" stroke="#5c5200" stroke-width="0.3" textLength="12" lengthAdjust="spacingAndGlyphs">ab</text></svg>
<span class="t" style="left:359.30px;top:186.18px;font-size:14.5px;line-height:20px;color:#111;transform-origin:0 50%;transform:scale(0.9562,1);">End_Taking_Trades</span>
<span class="t" style="left:631.00px;top:186.18px;font-size:14.5px;line-height:20px;color:#111;transform-origin:0 50%;transform:scale(0.8705,1);">19:10</span>
<svg style="left:333px;top:209.8px" width="21" height="21" viewBox="0 0 21 21"><path d="M0.4 3Q0.4 0.4 3 0.4H16.2L20.7 4.8V18L17.4 20.7 14.6 17.4 13 18.6 11.3 17.2 9.6 18.6 8 17.3 6.4 18.8 4.8 17.3 2.8 19.2 1.8 18.4 0.4 19.4z" fill="url(#gb)" stroke="#4fbb5a" stroke-width="0.85"/><path d="M16.2 0.4V4.8H20.7z" fill="#ffffff" fill-opacity="0.45"/><path d="M16.2 0.6V4.8H20.5" fill="none" stroke="#4fbb5a" stroke-opacity="0.7" stroke-width="0.7"/><path d="M3 12.8L10 7.1M11.7 10.6Q12.2 12.3 13.6 12.3H16.8" stroke="#0b7a12" stroke-width="1.9" fill="none"/></svg>
<span class="t" style="left:359.90px;top:211.18px;font-size:14.5px;line-height:20px;color:#111;transform-origin:0 50%;transform:scale(0.9206,1);">Trade_On_Sunday</span>
<span class="t" style="left:631.00px;top:211.18px;font-size:14.5px;line-height:20px;color:#111;transform-origin:0 50%;transform:scale(0.9310,1);">false</span>
<svg style="left:333px;top:234.8px" width="21" height="21" viewBox="0 0 21 21"><path d="M0.4 3Q0.4 0.4 3 0.4H16.2L20.7 4.8V18L17.4 20.7 14.6 17.4 13 18.6 11.3 17.2 9.6 18.6 8 17.3 6.4 18.8 4.8 17.3 2.8 19.2 1.8 18.4 0.4 19.4z" fill="url(#gb)" stroke="#4fbb5a" stroke-width="0.85"/><path d="M16.2 0.4V4.8H20.7z" fill="#ffffff" fill-opacity="0.45"/><path d="M16.2 0.6V4.8H20.5" fill="none" stroke="#4fbb5a" stroke-opacity="0.7" stroke-width="0.7"/><path d="M3 12.8L10 7.1M11.7 10.6Q12.2 12.3 13.6 12.3H16.8" stroke="#0b7a12" stroke-width="1.9" fill="none"/></svg>
<span class="t" style="left:359.90px;top:236.18px;font-size:14.5px;line-height:20px;color:#111;transform-origin:0 50%;transform:scale(0.9277,1);">Trade_On_Monday</span>
<span class="t" style="left:631.00px;top:236.18px;font-size:14.5px;line-height:20px;color:#111;transform-origin:0 50%;transform:scale(0.9310,1);">true</span>
<svg style="left:333px;top:259.8px" width="21" height="21" viewBox="0 0 21 21"><path d="M0.4 3Q0.4 0.4 3 0.4H16.2L20.7 4.8V18L17.4 20.7 14.6 17.4 13 18.6 11.3 17.2 9.6 18.6 8 17.3 6.4 18.8 4.8 17.3 2.8 19.2 1.8 18.4 0.4 19.4z" fill="url(#gb)" stroke="#4fbb5a" stroke-width="0.85"/><path d="M16.2 0.4V4.8H20.7z" fill="#ffffff" fill-opacity="0.45"/><path d="M16.2 0.6V4.8H20.5" fill="none" stroke="#4fbb5a" stroke-opacity="0.7" stroke-width="0.7"/><path d="M3 12.8L10 7.1M11.7 10.6Q12.2 12.3 13.6 12.3H16.8" stroke="#0b7a12" stroke-width="1.9" fill="none"/></svg>
<span class="t" style="left:359.90px;top:261.18px;font-size:14.5px;line-height:20px;color:#111;transform-origin:0 50%;transform:scale(0.9400,1);">Trade_On_Tuesday</span>
<span class="t" style="left:631.00px;top:261.18px;font-size:14.5px;line-height:20px;color:#111;transform-origin:0 50%;transform:scale(0.9310,1);">true</span>
<svg style="left:333px;top:284.8px" width="21" height="21" viewBox="0 0 21 21"><path d="M0.4 3Q0.4 0.4 3 0.4H16.2L20.7 4.8V18L17.4 20.7 14.6 17.4 13 18.6 11.3 17.2 9.6 18.6 8 17.3 6.4 18.8 4.8 17.3 2.8 19.2 1.8 18.4 0.4 19.4z" fill="url(#gb)" stroke="#4fbb5a" stroke-width="0.85"/><path d="M16.2 0.4V4.8H20.7z" fill="#ffffff" fill-opacity="0.45"/><path d="M16.2 0.6V4.8H20.5" fill="none" stroke="#4fbb5a" stroke-opacity="0.7" stroke-width="0.7"/><path d="M3 12.8L10 7.1M11.7 10.6Q12.2 12.3 13.6 12.3H16.8" stroke="#0b7a12" stroke-width="1.9" fill="none"/></svg>
<span class="t" style="left:359.90px;top:286.18px;font-size:14.5px;line-height:20px;color:#111;transform-origin:0 50%;transform:scale(0.9409,1);">Trade_On_Wednesday</span>
<span class="t" style="left:631.00px;top:286.18px;font-size:14.5px;line-height:20px;color:#111;transform-origin:0 50%;transform:scale(0.9310,1);">true</span>
<svg style="left:333px;top:309.8px" width="21" height="21" viewBox="0 0 21 21"><path d="M0.4 3Q0.4 0.4 3 0.4H16.2L20.7 4.8V18L17.4 20.7 14.6 17.4 13 18.6 11.3 17.2 9.6 18.6 8 17.3 6.4 18.8 4.8 17.3 2.8 19.2 1.8 18.4 0.4 19.4z" fill="url(#gb)" stroke="#4fbb5a" stroke-width="0.85"/><path d="M16.2 0.4V4.8H20.7z" fill="#ffffff" fill-opacity="0.45"/><path d="M16.2 0.6V4.8H20.5" fill="none" stroke="#4fbb5a" stroke-opacity="0.7" stroke-width="0.7"/><path d="M3 12.8L10 7.1M11.7 10.6Q12.2 12.3 13.6 12.3H16.8" stroke="#0b7a12" stroke-width="1.9" fill="none"/></svg>
<span class="t" style="left:359.90px;top:311.18px;font-size:14.5px;line-height:20px;color:#111;transform-origin:0 50%;transform:scale(0.9261,1);">Trade_On_Thursday</span>
<span class="t" style="left:631.00px;top:311.18px;font-size:14.5px;line-height:20px;color:#111;transform-origin:0 50%;transform:scale(0.9310,1);">true</span>
<svg style="left:333px;top:334.8px" width="21" height="21" viewBox="0 0 21 21"><path d="M0.4 3Q0.4 0.4 3 0.4H16.2L20.7 4.8V18L17.4 20.7 14.6 17.4 13 18.6 11.3 17.2 9.6 18.6 8 17.3 6.4 18.8 4.8 17.3 2.8 19.2 1.8 18.4 0.4 19.4z" fill="url(#gb)" stroke="#4fbb5a" stroke-width="0.85"/><path d="M16.2 0.4V4.8H20.7z" fill="#ffffff" fill-opacity="0.45"/><path d="M16.2 0.6V4.8H20.5" fill="none" stroke="#4fbb5a" stroke-opacity="0.7" stroke-width="0.7"/><path d="M3 12.8L10 7.1M11.7 10.6Q12.2 12.3 13.6 12.3H16.8" stroke="#0b7a12" stroke-width="1.9" fill="none"/></svg>
<span class="t" style="left:359.90px;top:336.18px;font-size:14.5px;line-height:20px;color:#111;transform-origin:0 50%;transform:scale(0.9241,1);">Trade_On_Friday</span>
<span class="t" style="left:631.00px;top:336.18px;font-size:14.5px;line-height:20px;color:#111;transform-origin:0 50%;transform:scale(0.9310,1);">true</span>
<svg style="left:333px;top:359.8px" width="21" height="21" viewBox="0 0 21 21"><path d="M0.4 3Q0.4 0.4 3 0.4H16.2L20.7 4.8V18L17.4 20.7 14.6 17.4 13 18.6 11.3 17.2 9.6 18.6 8 17.3 6.4 18.8 4.8 17.3 2.8 19.2 1.8 18.4 0.4 19.4z" fill="url(#gi)" stroke="#6596d6" stroke-width="0.85"/><path d="M16.2 0.4V4.8H20.7z" fill="#ffffff" fill-opacity="0.45"/><path d="M16.2 0.6V4.8H20.5" fill="none" stroke="#6596d6" stroke-opacity="0.7" stroke-width="0.7"/><text x="2.1" y="13.8" font-size="9.2" font-weight="bold" font-family="'Liberation Sans',sans-serif" fill="#15305c" stroke="#15305c" stroke-width="0.35" textLength="13.9" lengthAdjust="spacingAndGlyphs">123</text></svg>
<span class="t" style="left:359.30px;top:361.18px;font-size:14.5px;line-height:20px;color:#111;transform-origin:0 50%;transform:scale(0.9062,1);">Slow_MA</span>
<span class="t" style="left:631.00px;top:361.18px;font-size:14.5px;line-height:20px;color:#111;transform-origin:0 50%;transform:scale(0.8705,1);">92</span>
<svg style="left:333px;top:384.8px" width="21" height="21" viewBox="0 0 21 21"><path d="M0.4 3Q0.4 0.4 3 0.4H16.2L20.7 4.8V18L17.4 20.7 14.6 17.4 13 18.6 11.3 17.2 9.6 18.6 8 17.3 6.4 18.8 4.8 17.3 2.8 19.2 1.8 18.4 0.4 19.4z" fill="url(#gi)" stroke="#6596d6" stroke-width="0.85"/><path d="M16.2 0.4V4.8H20.7z" fill="#ffffff" fill-opacity="0.45"/><path d="M16.2 0.6V4.8H20.5" fill="none" stroke="#6596d6" stroke-opacity="0.7" stroke-width="0.7"/><text x="2.1" y="13.8" font-size="9.2" font-weight="bold" font-family="'Liberation Sans',sans-serif" fill="#15305c" stroke="#15305c" stroke-width="0.35" textLength="13.9" lengthAdjust="spacingAndGlyphs">123</text></svg>
<span class="t" style="left:359.90px;top:386.18px;font-size:14.5px;line-height:20px;color:#111;transform-origin:0 50%;transform:scale(0.8947,1);">Fast_MA</span>
<span class="t" style="left:631.00px;top:386.18px;font-size:14.5px;line-height:20px;color:#111;transform-origin:0 50%;transform:scale(0.8705,1);">5</span>
<svg style="left:333px;top:409.8px" width="21" height="21" viewBox="0 0 21 21"><path d="M0.4 3Q0.4 0.4 3 0.4H16.2L20.7 4.8V18L17.4 20.7 14.6 17.4 13 18.6 11.3 17.2 9.6 18.6 8 17.3 6.4 18.8 4.8 17.3 2.8 19.2 1.8 18.4 0.4 19.4z" fill="url(#gb)" stroke="#4fbb5a" stroke-width="0.85"/><path d="M16.2 0.4V4.8H20.7z" fill="#ffffff" fill-opacity="0.45"/><path d="M16.2 0.6V4.8H20.5" fill="none" stroke="#4fbb5a" stroke-opacity="0.7" stroke-width="0.7"/><path d="M3 12.8L10 7.1M11.7 10.6Q12.2 12.3 13.6 12.3H16.8" stroke="#0b7a12" stroke-width="1.9" fill="none"/></svg>
<span class="t" style="left:359.30px;top:411.18px;font-size:14.5px;line-height:20px;color:#111;transform-origin:0 50%;transform:scale(0.9298,1);">Use_Variable_Lot_Size</span>
<span class="t" style="left:631.00px;top:411.18px;font-size:14.5px;line-height:20px;color:#111;transform-origin:0 50%;transform:scale(0.9310,1);">false</span>
<svg style="left:333px;top:434.8px" width="21" height="21" viewBox="0 0 21 21"><path d="M0.4 3Q0.4 0.4 3 0.4H16.2L20.7 4.8V18L17.4 20.7 14.6 17.4 13 18.6 11.3 17.2 9.6 18.6 8 17.3 6.4 18.8 4.8 17.3 2.8 19.2 1.8 18.4 0.4 19.4z" fill="url(#gd)" stroke="#5fb9cc" stroke-width="0.85"/><path d="M16.2 0.4V4.8H20.7z" fill="#ffffff" fill-opacity="0.45"/><path d="M16.2 0.6V4.8H20.5" fill="none" stroke="#5fb9cc" stroke-opacity="0.7" stroke-width="0.7"/><text font-family="'Liberation Sans',sans-serif" fill="#1a6a80" stroke="#1a6a80" stroke-width="0.25" font-weight="bold" font-size="7.6"><tspan x="2.2" y="9.2">1</tspan><tspan x="5.3" y="12.3" font-size="11" font-weight="normal">/</tspan><tspan x="8.8" y="13.3">2</tspan></text></svg>
<span class="t" style="left:359.90px;top:436.18px;font-size:14.5px;line-height:20px;color:#111;transform-origin:0 50%;transform:scale(0.9047,1);">Percent_At_Risk</span>
<span class="t" style="left:631.00px;top:436.18px;font-size:14.5px;line-height:20px;color:#111;transform-origin:0 50%;transform:scale(0.8705,1);">2.0</span>
<svg style="left:333px;top:459.8px" width="21" height="21" viewBox="0 0 21 21"><path d="M0.4 3Q0.4 0.4 3 0.4H16.2L20.7 4.8V18L17.4 20.7 14.6 17.4 13 18.6 11.3 17.2 9.6 18.6 8 17.3 6.4 18.8 4.8 17.3 2.8 19.2 1.8 18.4 0.4 19.4z" fill="url(#gd)" stroke="#5fb9cc" stroke-width="0.85"/><path d="M16.2 0.4V4.8H20.7z" fill="#ffffff" fill-opacity="0.45"/><path d="M16.2 0.6V4.8H20.5" fill="none" stroke="#5fb9cc" stroke-opacity="0.7" stroke-width="0.7"/><text font-family="'Liberation Sans',sans-serif" fill="#1a6a80" stroke="#1a6a80" stroke-width="0.25" font-weight="bold" font-size="7.6"><tspan x="2.2" y="9.2">1</tspan><tspan x="5.3" y="12.3" font-size="11" font-weight="normal">/</tspan><tspan x="8.8" y="13.3">2</tspan></text></svg>
<span class="t" style="left:359.30px;top:461.18px;font-size:14.5px;line-height:20px;color:#111;transform-origin:0 50%;transform:scale(0.8914,1);">Max_Lot_Size</span>
<span class="t" style="left:631.00px;top:461.18px;font-size:14.5px;line-height:20px;color:#111;transform-origin:0 50%;transform:scale(0.8705,1);">1.0</span>
<svg style="left:333px;top:484.8px" width="21" height="21" viewBox="0 0 21 21"><path d="M0.4 3Q0.4 0.4 3 0.4H16.2L20.7 4.8V18L17.4 20.7 14.6 17.4 13 18.6 11.3 17.2 9.6 18.6 8 17.3 6.4 18.8 4.8 17.3 2.8 19.2 1.8 18.4 0.4 19.4z" fill="url(#gd)" stroke="#5fb9cc" stroke-width="0.85"/><path d="M16.2 0.4V4.8H20.7z" fill="#ffffff" fill-opacity="0.45"/><path d="M16.2 0.6V4.8H20.5" fill="none" stroke="#5fb9cc" stroke-opacity="0.7" stroke-width="0.7"/><text font-family="'Liberation Sans',sans-serif" fill="#1a6a80" stroke="#1a6a80" stroke-width="0.25" font-weight="bold" font-size="7.6"><tspan x="2.2" y="9.2">1</tspan><tspan x="5.3" y="12.3" font-size="11" font-weight="normal">/</tspan><tspan x="8.8" y="13.3">2</tspan></text></svg>
<span class="t" style="left:359.30px;top:486.18px;font-size:14.5px;line-height:20px;color:#111;transform-origin:0 50%;transform:scale(0.8808,1);">Lot_Size</span>
<span class="t" style="left:631.00px;top:486.18px;font-size:14.5px;line-height:20px;color:#111;transform-origin:0 50%;transform:scale(0.8705,1);">0.01</span>
<svg style="left:333px;top:509.8px" width="21" height="21" viewBox="0 0 21 21"><path d="M0.4 3Q0.4 0.4 3 0.4H16.2L20.7 4.8V18L17.4 20.7 14.6 17.4 13 18.6 11.3 17.2 9.6 18.6 8 17.3 6.4 18.8 4.8 17.3 2.8 19.2 1.8 18.4 0.4 19.4z" fill="url(#gd)" stroke="#5fb9cc" stroke-width="0.85"/><path d="M16.2 0.4V4.8H20.7z" fill="#ffffff" fill-opacity="0.45"/><path d="M16.2 0.6V4.8H20.5" fill="none" stroke="#5fb9cc" stroke-opacity="0.7" stroke-width="0.7"/><text font-family="'Liberation Sans',sans-serif" fill="#1a6a80" stroke="#1a6a80" stroke-width="0.25" font-weight="bold" font-size="7.6"><tspan x="2.2" y="9.2">1</tspan><tspan x="5.3" y="12.3" font-size="11" font-weight="normal">/</tspan><tspan x="8.8" y="13.3">2</tspan></text></svg>
<span class="t" style="left:359.30px;top:511.18px;font-size:14.5px;line-height:20px;color:#111;transform-origin:0 50%;transform:scale(0.8289,1);">SL</span>
<span class="t" style="left:631.00px;top:511.18px;font-size:14.5px;line-height:20px;color:#111;transform-origin:0 50%;transform:scale(0.8705,1);">70.0</span>
<svg style="left:333px;top:534.8px" width="21" height="21" viewBox="0 0 21 21"><path d="M0.4 3Q0.4 0.4 3 0.4H16.2L20.7 4.8V18L17.4 20.7 14.6 17.4 13 18.6 11.3 17.2 9.6 18.6 8 17.3 6.4 18.8 4.8 17.3 2.8 19.2 1.8 18.4 0.4 19.4z" fill="url(#gd)" stroke="#5fb9cc" stroke-width="0.85"/><path d="M16.2 0.4V4.8H20.7z" fill="#ffffff" fill-opacity="0.45"/><path d="M16.2 0.6V4.8H20.5" fill="none" stroke="#5fb9cc" stroke-opacity="0.7" stroke-width="0.7"/><text font-family="'Liberation Sans',sans-serif" fill="#1a6a80" stroke="#1a6a80" stroke-width="0.25" font-weight="bold" font-size="7.6"><tspan x="2.2" y="9.2">1</tspan><tspan x="5.3" y="12.3" font-size="11" font-weight="normal">/</tspan><tspan x="8.8" y="13.3">2</tspan></text></svg>
<span class="t" style="left:359.90px;top:536.18px;font-size:14.5px;line-height:20px;color:#111;transform-origin:0 50%;transform:scale(0.8689,1);">TP</span>
<span class="t" style="left:631.00px;top:536.18px;font-size:14.5px;line-height:20px;color:#111;transform-origin:0 50%;transform:scale(0.8705,1);">10.0</span>
<svg style="left:333px;top:559.8px" width="21" height="21" viewBox="0 0 21 21"><path d="M0.4 3Q0.4 0.4 3 0.4H16.2L20.7 4.8V18L17.4 20.7 14.6 17.4 13 18.6 11.3 17.2 9.6 18.6 8 17.3 6.4 18.8 4.8 17.3 2.8 19.2 1.8 18.4 0.4 19.4z" fill="url(#gi)" stroke="#6596d6" stroke-width="0.85"/><path d="M16.2 0.4V4.8H20.7z" fill="#ffffff" fill-opacity="0.45"/><path d="M16.2 0.6V4.8H20.5" fill="none" stroke="#6596d6" stroke-opacity="0.7" stroke-width="0.7"/><text x="2.1" y="13.8" font-size="9.2" font-weight="bold" font-family="'Liberation Sans',sans-serif" fill="#15305c" stroke="#15305c" stroke-width="0.35" textLength="13.9" lengthAdjust="spacingAndGlyphs">123</text></svg>
<span class="t" style="left:359.30px;top:561.18px;font-size:14.5px;line-height:20px;color:#111;transform-origin:0 50%;transform:scale(0.9057,1);">CCI_Period_Long</span>
<span class="t" style="left:631.00px;top:561.18px;font-size:14.5px;line-height:20px;color:#111;transform-origin:0 50%;transform:scale(0.8705,1);">20</span>
<svg style="left:333px;top:584.8px" width="21" height="21" viewBox="0 0 21 21"><path d="M0.4 3Q0.4 0.4 3 0.4H16.2L20.7 4.8V18L17.4 20.7 14.6 17.4 13 18.6 11.3 17.2 9.6 18.6 8 17.3 6.4 18.8 4.8 17.3 2.8 19.2 1.8 18.4 0.4 19.4z" fill="url(#gi)" stroke="#6596d6" stroke-width="0.85"/><path d="M16.2 0.4V4.8H20.7z" fill="#ffffff" fill-opacity="0.45"/><path d="M16.2 0.6V4.8H20.5" fill="none" stroke="#6596d6" stroke-opacity="0.7" stroke-width="0.7"/><text x="2.1" y="13.8" font-size="9.2" font-weight="bold" font-family="'Liberation Sans',sans-serif" fill="#15305c" stroke="#15305c" stroke-width="0.35" textLength="13.9" lengthAdjust="spacingAndGlyphs">123</text></svg>
<span class="t" style="left:359.30px;top:586.18px;font-size:14.5px;line-height:20px;color:#111;transform-origin:0 50%;transform:scale(0.8874,1);">CCI_Long_Low</span>
<span class="t" style="left:631.00px;top:586.18px;font-size:14.5px;line-height:20px;color:#111;transform-origin:0 50%;transform:scale(0.8705,1);">-100</span>
<svg style="left:333px;top:609.8px" width="21" height="21" viewBox="0 0 21 21"><path d="M0.4 3Q0.4 0.4 3 0.4H16.2L20.7 4.8V18L17.4 20.7 14.6 17.4 13 18.6 11.3 17.2 9.6 18.6 8 17.3 6.4 18.8 4.8 17.3 2.8 19.2 1.8 18.4 0.4 19.4z" fill="url(#gi)" stroke="#6596d6" stroke-width="0.85"/><path d="M16.2 0.4V4.8H20.7z" fill="#ffffff" fill-opacity="0.45"/><path d="M16.2 0.6V4.8H20.5" fill="none" stroke="#6596d6" stroke-opacity="0.7" stroke-width="0.7"/><text x="2.1" y="13.8" font-size="9.2" font-weight="bold" font-family="'Liberation Sans',sans-serif" fill="#15305c" stroke="#15305c" stroke-width="0.35" textLength="13.9" lengthAdjust="spacingAndGlyphs">123</text></svg>
<span class="t" style="left:359.30px;top:611.18px;font-size:14.5px;line-height:20px;color:#111;transform-origin:0 50%;transform:scale(0.8946,1);">CCI_Long_High</span>
<span class="t" style="left:631.00px;top:611.18px;font-size:14.5px;line-height:20px;color:#111;transform-origin:0 50%;transform:scale(0.8705,1);">100</span>
<svg style="left:333px;top:634.8px" width="21" height="21" viewBox="0 0 21 21"><path d="M0.4 3Q0.4 0.4 3 0.4H16.2L20.7 4.8V18L17.4 20.7 14.6 17.4 13 18.6 11.3 17.2 9.6 18.6 8 17.3 6.4 18.8 4.8 17.3 2.8 19.2 1.8 18.4 0.4 19.4z" fill="url(#gi)" stroke="#6596d6" stroke-width="0.85"/><path d="M16.2 0.4V4.8H20.7z" fill="#ffffff" fill-opacity="0.45"/><path d="M16.2 0.6V4.8H20.5" fill="none" stroke="#6596d6" stroke-opacity="0.7" stroke-width="0.7"/><text x="2.1" y="13.8" font-size="9.2" font-weight="bold" font-family="'Liberation Sans',sans-serif" fill="#15305c" stroke="#15305c" stroke-width="0.35" textLength="13.9" lengthAdjust="spacingAndGlyphs">123</text></svg>
<span class="t" style="left:359.30px;top:636.18px;font-size:14.5px;line-height:20px;color:#111;transform-origin:0 50%;transform:scale(0.9009,1);">CCI_Period_Short</span>
<span class="t" style="left:631.00px;top:636.18px;font-size:14.5px;line-height:20px;color:#111;transform-origin:0 50%;transform:scale(0.8705,1);">15</span>
<svg style="left:333px;top:659.8px" width="21" height="21" viewBox="0 0 21 21"><path d="M0.4 3Q0.4 0.4 3 0.4H16.2L20.7 4.8V18L17.4 20.7 14.6 17.4 13 18.6 11.3 17.2 9.6 18.6 8 17.3 6.4 18.8 4.8 17.3 2.8 19.2 1.8 18.4 0.4 19.4z" fill="url(#gi)" stroke="#6596d6" stroke-width="0.85"/><path d="M16.2 0.4V4.8H20.7z" fill="#ffffff" fill-opacity="0.45"/><path d="M16.2 0.6V4.8H20.5" fill="none" stroke="#6596d6" stroke-opacity="0.7" stroke-width="0.7"/><text x="2.1" y="13.8" font-size="9.2" font-weight="bold" font-family="'Liberation Sans',sans-serif" fill="#15305c" stroke="#15305c" stroke-width="0.35" textLength="13.9" lengthAdjust="spacingAndGlyphs">123</text></svg>
<span class="t" style="left:359.30px;top:661.18px;font-size:14.5px;line-height:20px;color:#111;transform-origin:0 50%;transform:scale(0.8764,1);">CCI_Short_Low</span>
<span class="t" style="left:631.00px;top:661.18px;font-size:14.5px;line-height:20px;color:#111;transform-origin:0 50%;transform:scale(0.8705,1);">-82</span>
<svg style="left:333px;top:684.8px" width="21" height="21" viewBox="0 0 21 21"><path d="M0.4 3Q0.4 0.4 3 0.4H16.2L20.7 4.8V18L17.4 20.7 14.6 17.4 13 18.6 11.3 17.2 9.6 18.6 8 17.3 6.4 18.8 4.8 17.3 2.8 19.2 1.8 18.4 0.4 19.4z" fill="url(#gi)" stroke="#6596d6" stroke-width="0.85"/><path d="M16.2 0.4V4.8H20.7z" fill="#ffffff" fill-opacity="0.45"/><path d="M16.2 0.6V4.8H20.5" fill="none" stroke="#6596d6" stroke-opacity="0.7" stroke-width="0.7"/><text x="2.1" y="13.8" font-size="9.2" font-weight="bold" font-family="'Liberation Sans',sans-serif" fill="#15305c" stroke="#15305c" stroke-width="0.35" textLength="13.9" lengthAdjust="spacingAndGlyphs">123</text></svg>
<span class="t" style="left:359.30px;top:686.18px;font-size:14.5px;line-height:20px;color:#111;transform-origin:0 50%;transform:scale(0.8818,1);">CCI_Short_High</span>
<span class="t" style="left:631.00px;top:686.18px;font-size:14.5px;line-height:20px;color:#111;transform-origin:0 50%;transform:scale(0.8705,1);">91</span>
<svg style="left:333px;top:709.8px" width="21" height="21" viewBox="0 0 21 21"><path d="M0.4 3Q0.4 0.4 3 0.4H16.2L20.7 4.8V18L17.4 20.7 14.6 17.4 13 18.6 11.3 17.2 9.6 18.6 8 17.3 6.4 18.8 4.8 17.3 2.8 19.2 1.8 18.4 0.4 19.4z" fill="url(#gi)" stroke="#6596d6" stroke-width="0.85"/><path d="M16.2 0.4V4.8H20.7z" fill="#ffffff" fill-opacity="0.45"/><path d="M16.2 0.6V4.8H20.5" fill="none" stroke="#6596d6" stroke-opacity="0.7" stroke-width="0.7"/><text x="2.1" y="13.8" font-size="9.2" font-weight="bold" font-family="'Liberation Sans',sans-serif" fill="#15305c" stroke="#15305c" stroke-width="0.35" textLength="13.9" lengthAdjust="spacingAndGlyphs">123</text></svg>
<span class="t" style="left:359.30px;top:711.18px;font-size:14.5px;line-height:20px;color:#111;transform-origin:0 50%;transform:scale(0.8979,1);">Exit_after_Days</span>
<span class="t" style="left:631.00px;top:711.18px;font-size:14.5px;line-height:20px;color:#111;transform-origin:0 50%;transform:scale(0.8705,1);">0</span>
<svg style="left:333px;top:734.8px" width="21" height="21" viewBox="0 0 21 21"><path d="M0.4 3Q0.4 0.4 3 0.4H16.2L20.7 4.8V18L17.4 20.7 14.6 17.4 13 18.6 11.3 17.2 9.6 18.6 8 17.3 6.4 18.8 4.8 17.3 2.8 19.2 1.8 18.4 0.4 19.4z" fill="url(#gi)" stroke="#6596d6" stroke-width="0.85"/><path d="M16.2 0.4V4.8H20.7z" fill="#ffffff" fill-opacity="0.45"/><path d="M16.2 0.6V4.8H20.5" fill="none" stroke="#6596d6" stroke-opacity="0.7" stroke-width="0.7"/><text x="2.1" y="13.8" font-size="9.2" font-weight="bold" font-family="'Liberation Sans',sans-serif" fill="#15305c" stroke="#15305c" stroke-width="0.35" textLength="13.9" lengthAdjust="spacingAndGlyphs">123</text></svg>
<span class="t" style="left:359.30px;top:736.18px;font-size:14.5px;line-height:20px;color:#111;transform-origin:0 50%;transform:scale(0.8862,1);">Exit_after_Hours</span>
<span class="t" style="left:631.00px;top:736.18px;font-size:14.5px;line-height:20px;color:#111;transform-origin:0 50%;transform:scale(0.8705,1);">4</span>
<svg style="left:333px;top:759.8px" width="21" height="21" viewBox="0 0 21 21"><path d="M0.4 3Q0.4 0.4 3 0.4H16.2L20.7 4.8V18L17.4 20.7 14.6 17.4 13 18.6 11.3 17.2 9.6 18.6 8 17.3 6.4 18.8 4.8 17.3 2.8 19.2 1.8 18.4 0.4 19.4z" fill="url(#gi)" stroke="#6596d6" stroke-width="0.85"/><path d="M16.2 0.4V4.8H20.7z" fill="#ffffff" fill-opacity="0.45"/><path d="M16.2 0.6V4.8H20.5" fill="none" stroke="#6596d6" stroke-opacity="0.7" stroke-width="0.7"/><text x="2.1" y="13.8" font-size="9.2" font-weight="bold" font-family="'Liberation Sans',sans-serif" fill="#15305c" stroke="#15305c" stroke-width="0.35" textLength="13.9" lengthAdjust="spacingAndGlyphs">123</text></svg>
<span class="t" style="left:359.30px;top:761.18px;font-size:14.5px;line-height:20px;color:#111;transform-origin:0 50%;transform:scale(0.8787,1);">Exit_after_Mins</span>
<span class="t" style="left:631.00px;top:761.18px;font-size:14.5px;line-height:20px;color:#111;transform-origin:0 50%;transform:scale(0.8705,1);">0</span>
<svg style="left:333px;top:784.8px" width="21" height="21" viewBox="0 0 21 21"><path d="M0.4 3Q0.4 0.4 3 0.4H16.2L20.7 4.8V18L17.4 20.7 14.6 17.4 13 18.6 11.3 17.2 9.6 18.6 8 17.3 6.4 18.8 4.8 17.3 2.8 19.2 1.8 18.4 0.4 19.4z" fill="url(#gi)" stroke="#6596d6" stroke-width="0.85"/><path d="M16.2 0.4V4.8H20.7z" fill="#ffffff" fill-opacity="0.45"/><path d="M16.2 0.6V4.8H20.5" fill="none" stroke="#6596d6" stroke-opacity="0.7" stroke-width="0.7"/><text x="2.1" y="13.8" font-size="9.2" font-weight="bold" font-family="'Liberation Sans',sans-serif" fill="#15305c" stroke="#15305c" stroke-width="0.35" textLength="13.9" lengthAdjust="spacingAndGlyphs">123</text></svg>
<span class="t" style="left:359.30px;top:786.18px;font-size:14.5px;line-height:20px;color:#111;transform-origin:0 50%;transform:scale(0.9337,1);">Slippage_Filter</span>
<span class="t" style="left:631.00px;top:786.18px;font-size:14.5px;line-height:20px;color:#111;transform-origin:0 50%;transform:scale(0.8705,1);">50</span>
</div>
<div class="r" style="left:923px;top:83px;width:20px;height:719.5px;background:#f0f0f0;"></div>
<div class="r" style="left:930px;top:105px;width:6px;height:608px;background:#8b8b8b;"></div>
<div class="r" style="left:956px;top:735px;width:138px;height:26px;background:#fdfdfd;border:1px solid #d0d0d0;border-bottom-color:#bdbdbd;border-radius:4px;box-sizing:border-box;"></div>
<span class="t" style="left:1009.50px;top:738.88px;font-size:14.2px;line-height:20px;color:#111;letter-spacing:-0.147px;">Load</span>
<div class="r" style="left:956px;top:775px;width:138px;height:26px;background:#fdfdfd;border:1px solid #d0d0d0;border-bottom-color:#bdbdbd;border-radius:4px;box-sizing:border-box;"></div>
<span class="t" style="left:1009.50px;top:778.88px;font-size:14.2px;line-height:20px;color:#111;transform-origin:0 50%;transform:scale(0.9578,1);">Save</span>
<div class="r" style="left:787px;top:821px;width:98px;height:26px;background:#fdfdfd;border:1.5px solid #0067c0;border-bottom-color:#0067c0;border-radius:4px;box-sizing:border-box;"></div>
<span class="t" style="left:826.50px;top:824.88px;font-size:14.2px;line-height:20px;color:#111;transform-origin:0 50%;transform:scale(0.9261,1);">OK</span>
<div class="r" style="left:895px;top:821px;width:98px;height:26px;background:#fdfdfd;border:1px solid #d0d0d0;border-bottom-color:#bdbdbd;border-radius:4px;box-sizing:border-box;"></div>
<span class="t" style="left:923.00px;top:824.88px;font-size:14.2px;line-height:20px;color:#111;transform-origin:0 50%;transform:scale(0.9502,1);">Cancel</span>
<div class="r" style="left:1003px;top:821px;width:98px;height:26px;background:#fdfdfd;border:1px solid #d0d0d0;border-bottom-color:#bdbdbd;border-radius:4px;box-sizing:border-box;"></div>
<span class="t" style="left:1033.50px;top:824.88px;font-size:14.2px;line-height:20px;color:#111;letter-spacing:-0.019px;">Reset</span>
<svg style="left:1100px;top:847px" width="10" height="10"><g fill="#bdbdbd"><rect x="5.3" y="2.5" width="2.8" height="2.8"/><rect x="2" y="5.9" width="2.8" height="2.8"/><rect x="5.3" y="5.9" width="2.8" height="2.8"/></g></svg>
</body></html>
